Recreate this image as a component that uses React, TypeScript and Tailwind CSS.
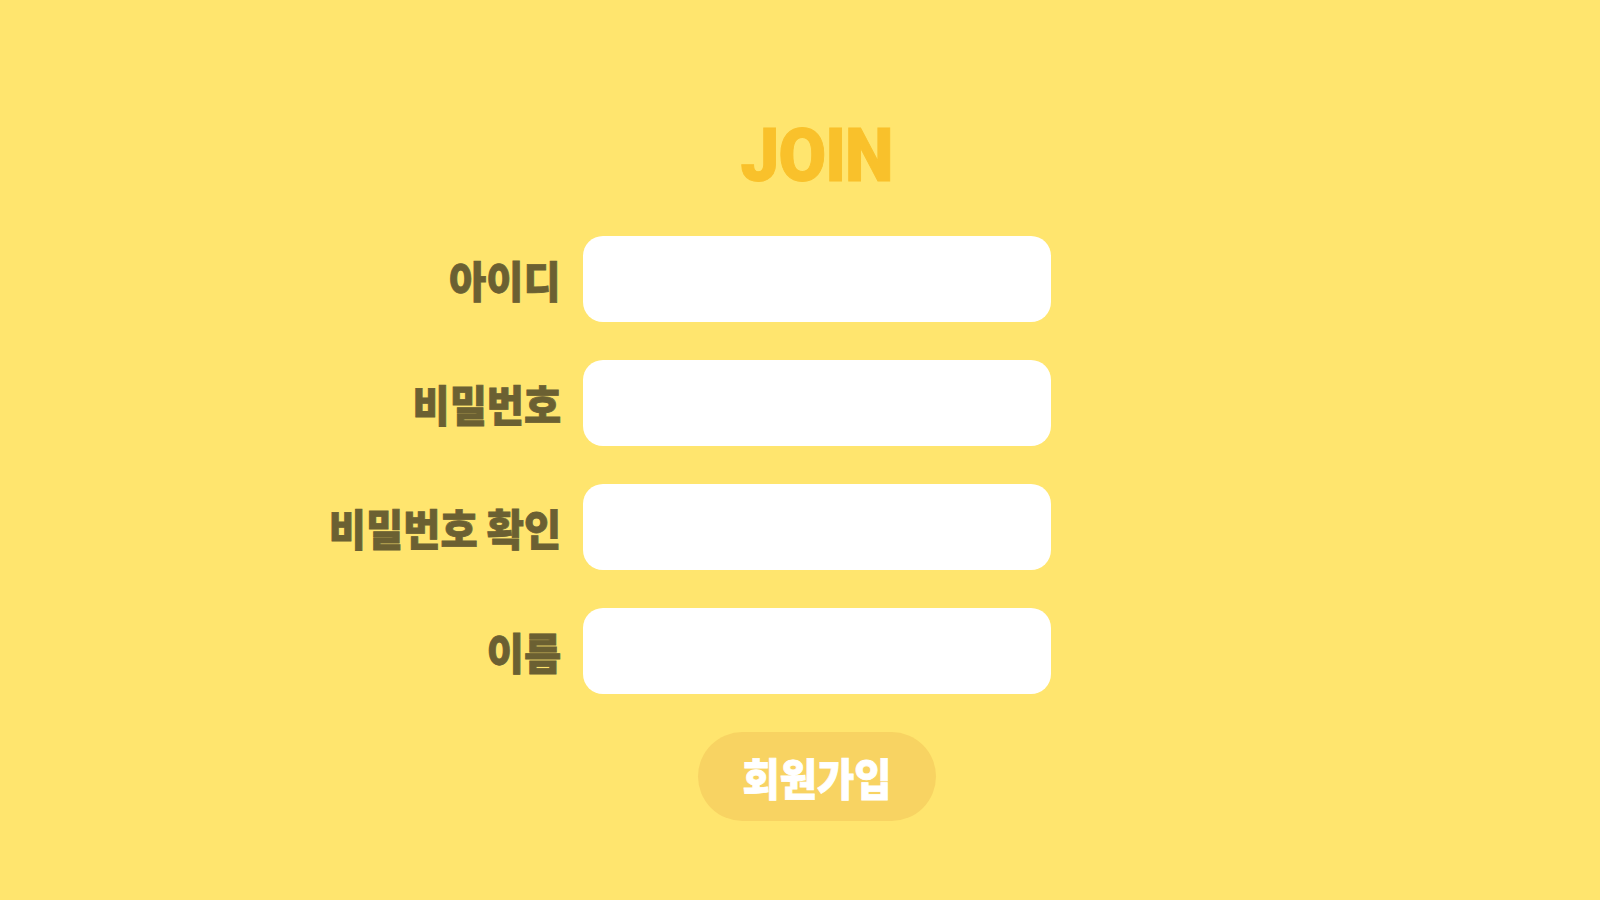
import React from 'react';

const fields = [
  { id: 'userId', label: '아이디', type: 'text' },
  { id: 'password', label: '비밀번호', type: 'password' },
  { id: 'passwordCheck', label: '비밀번호 확인', type: 'password' },
  { id: 'name', label: '이름', type: 'text' },
];

export default function App() {
  return (
    <div className="min-h-screen w-full bg-[#FFE56E] pl-[34px] pt-[118px] flex flex-col items-center font-['Noto_Sans_CJK_KR',sans-serif]">
      <h1 className="text-[75px] leading-none font-black text-[#F9C12B] font-['Roboto','Noto_Sans_CJK_KR',sans-serif] [-webkit-text-stroke:1px_#F9C12B]">
        <span className="inline-block scale-x-[0.92] tracking-[-1px]">JOIN</span>
      </h1>

      <form className="mt-[43px] w-full flex flex-col gap-[38px]" onSubmit={(e) => e.preventDefault()}>
        {fields.map((f) => (
          <div key={f.id} className="grid grid-cols-[1fr_468px_1fr] items-center">
            <label
              htmlFor={f.id}
              className="text-right pr-[22px] text-[43px] leading-none font-black text-[#6B6032] whitespace-nowrap [-webkit-text-stroke:0.8px_#6B6032]"
            >
              <span className="inline-block origin-right scale-x-[0.94]">{f.label}</span>
            </label>
            <input
              id={f.id}
              type={f.type}
              className="h-[86px] w-full rounded-[20px] bg-white px-5 text-2xl outline-none border-0"
            />
            <div />
          </div>
        ))}
      </form>

      <button
        type="button"
        className="mt-[38px] h-[89px] w-[238px] rounded-full bg-[#F8D362] text-white text-[44px] leading-none font-black flex items-center justify-center [-webkit-text-stroke:0.8px_#ffffff]"
      >
        <span className="inline-block scale-x-[0.92]">회원가입</span>
      </button>
    </div>
  );
}
